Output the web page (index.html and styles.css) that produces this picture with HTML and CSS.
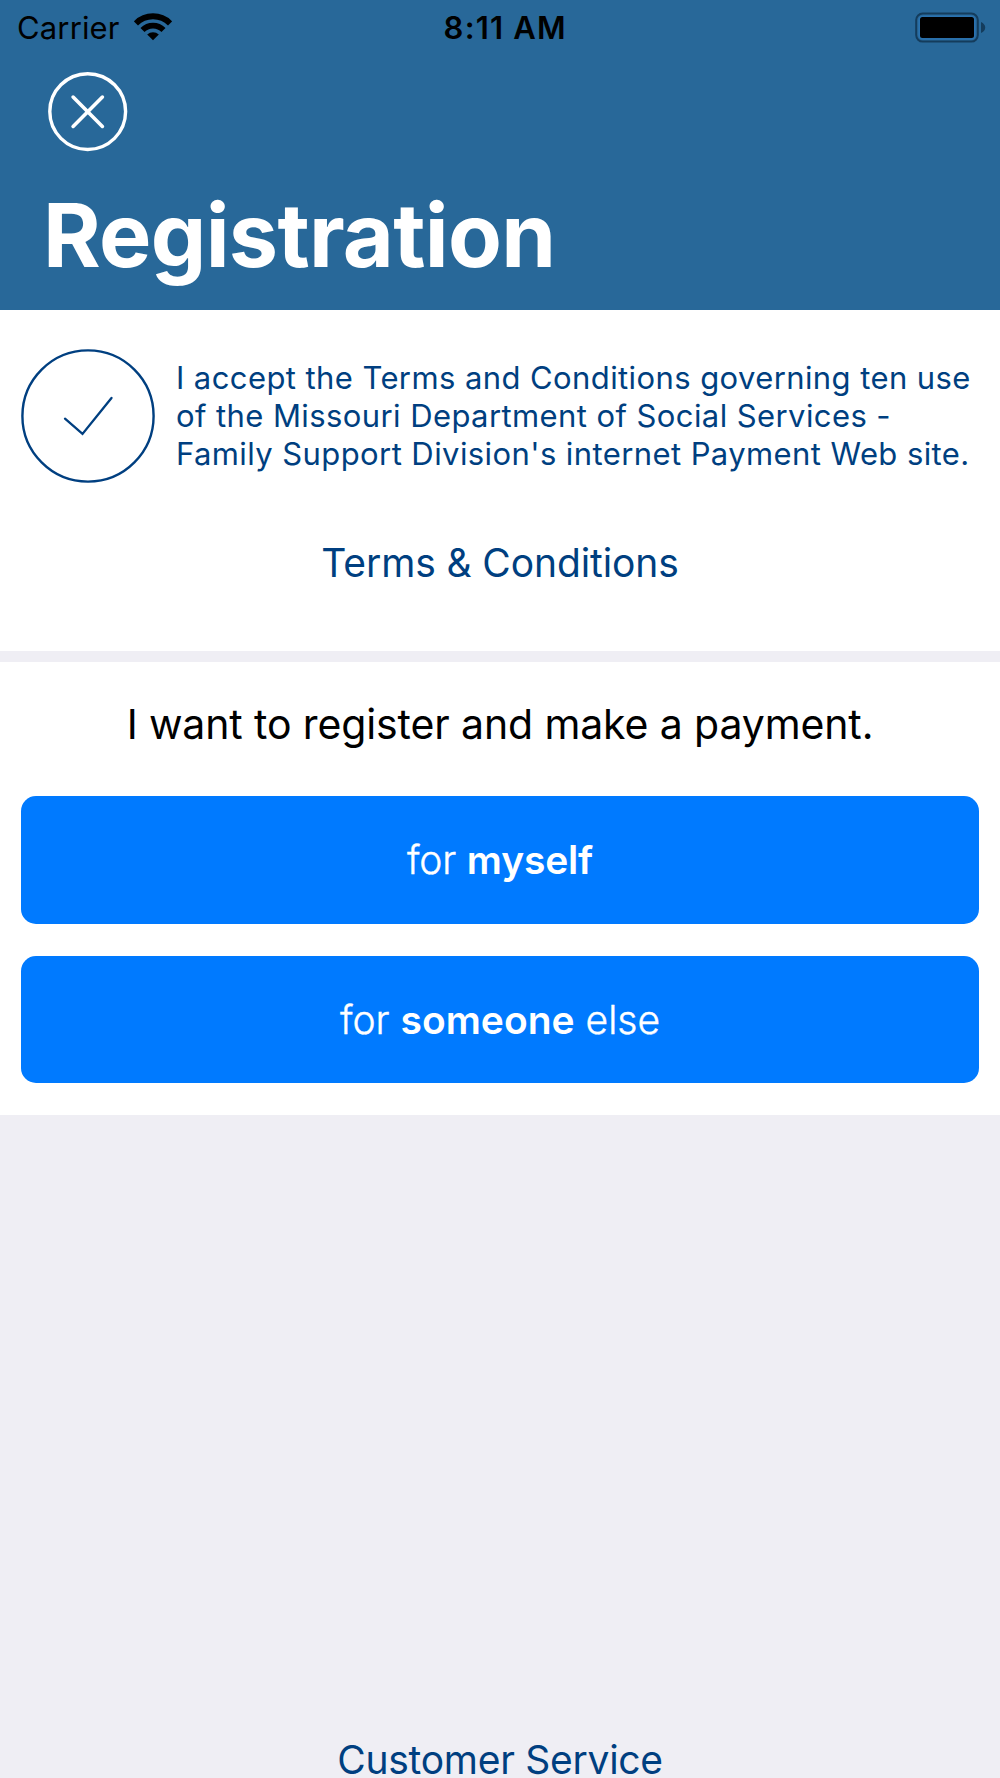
FILE: index.html
```html
<!DOCTYPE html>
<html lang="en">
<head>
    <meta charset="UTF-8">
    <title>Registration</title>
    <link rel="stylesheet" href="styles.css">
</head>
<body>
<div class="screen">
    <div class="header">
        <div class="status">
            <div class="carrier">
                <span>Carrier</span>
                <svg class="wifi" width="38" height="28" viewBox="0 0 38 28">
                    <path d="M1.9 10.4A24.2 24.2 0 0 1 36.1 10.4" fill="none" stroke="#000" stroke-width="5.9"/>
                    <path d="M8.5 17A14.9 14.9 0 0 1 29.5 17" fill="none" stroke="#000" stroke-width="5.7"/>
                    <path d="M19 27.3L13.2 21.6A8.2 8.2 0 0 1 24.8 21.6Z"/>
                </svg>
            </div>
            <div class="time">8:11 AM</div>
            <div class="battery">
                <svg width="72" height="32" viewBox="0 0 72 32">
                    <rect x="1.2" y="1.6" width="61.6" height="28" rx="6.5" fill="none" stroke="#143c5c" stroke-width="2"/>
                    <rect x="4.2" y="4.2" width="55.6" height="22.8" rx="4" fill="none" stroke="#2a72b0" stroke-width="1.6"/>
                    <rect x="5" y="5" width="54" height="21" rx="2.5"/>
                    <path d="M66 10Q70.2 12 70.2 15.5T66 21Z" fill="#143c5c"/>
                </svg>
            </div>
        </div>
        <a href="#" class="close">
            <svg width="80" height="80" viewBox="0 0 80 80" fill="none" stroke="#fff">
                <circle cx="39.7" cy="39.6" r="37.9" stroke-width="3.4"/>
                <path d="M25.1 25.1L54.4 54.4M54.4 25.1L25.1 54.4" stroke-width="3.6" stroke-linecap="round"/>
            </svg>
        </a>
        <h1>Registration</h1>
    </div>
    <div class="terms">
        <div class="accept">
            <svg class="check" width="134" height="134" viewBox="0 0 134 134" fill="none" stroke="#003f80">
                <circle cx="67" cy="67" r="65.6" stroke-width="2.4"/>
                <path d="M44 69.7L61.5 84.9L90.5 49" stroke-width="2.3" stroke-linecap="round"/>
            </svg>
            <p>I accept the Terms and Conditions governing ten use<br>of the Missouri Department of Social Services -<br>Family Support Division's internet Payment Web site.</p>
        </div>
        <a href="#" class="link">Terms &amp; Conditions</a>
    </div>
    <div class="register">
        <h2>I want to register and make a payment.</h2>
        <a href="#" class="btn myself"><span>for <b>myself</b></span></a>
        <a href="#" class="btn"><span>for <b>someone</b> else</span></a>
    </div>
    <a href="#" class="service">Customer Service</a>
</div>
</body>
</html>
```
FILE: styles.css
```css
* {
    margin: 0;
    padding: 0;
    box-sizing: border-box;
}

body {
    font-family: Inter, "Liberation Sans", sans-serif;
    background-color: #efeef4;
}

a {
    text-decoration: none;
    color: #003f80;
}

svg {
    display: block;
}

.screen {
    display: flex;
    flex-direction: column;
    width: 1000px;
    height: 1778px;
    overflow: hidden;
}

.header {
    height: 309.5px;
    background-color: #286899;
}

.status {
    display: grid;
    grid-template-columns: 1fr auto 1fr;
    align-items: center;
    height: 55px;
    padding: 0 13.5px 0 17px;
    font-size: 31px;
    line-height: 55px;
}

.carrier {
    display: flex;
    align-items: center;
    gap: 14.6px;
    letter-spacing: 0.15px;
}

.wifi {
    margin-top: -2px;
}

.time {
    padding-left: 7px;
    font-weight: 600;
    letter-spacing: 1.2px;
}

.battery {
    justify-self: end;
}

.close {
    display: block;
    width: 80px;
    margin: 17px 0 0 48px;
}

h1 {
    margin: 30px 0 0 43px;
    font-size: 88px;
    font-weight: 700;
    line-height: 106px;
    letter-spacing: -0.7px;
    color: #fff;
}

.terms {
    height: 341px;
    padding: 39.2px 21px 0;
    background-color: #fff;
}

.accept {
    display: flex;
    align-items: center;
    gap: 21px;
}

.check {
    flex: none;
}

.accept p {
    margin-top: 1px;
    font-size: 31px;
    line-height: 38px;
    letter-spacing: 0.41px;
    white-space: nowrap;
    color: #003f80;
}

.link {
    display: block;
    margin-top: 56.6px;
    font-size: 39px;
    line-height: 48px;
    letter-spacing: -0.12px;
    text-align: center;
}

.register {
    margin-top: 11px;
    padding: 38px 21.3px 32px;
    background-color: #fff;
}

h2 {
    margin-bottom: 48.6px;
    font-size: 41px;
    font-weight: 400;
    line-height: 48px;
    letter-spacing: -0.12px;
    text-align: center;
    color: #000;
}

.btn {
    display: flex;
    align-items: center;
    justify-content: center;
    height: 127.6px;
    border-radius: 15px;
    background-color: #007aff;
    font-size: 39px;
    font-weight: 300;
    color: #fff;
    -webkit-text-stroke: 0.4px #fff;
}

.btn b {
    font-weight: 600;
    -webkit-text-stroke: 0;
}

.myself {
    margin-bottom: 32.2px;
    letter-spacing: -0.17px;
}

.service {
    margin-top: auto;
    font-size: 39px;
    line-height: 37px;
    letter-spacing: -0.27px;
    text-align: center;
}
```
